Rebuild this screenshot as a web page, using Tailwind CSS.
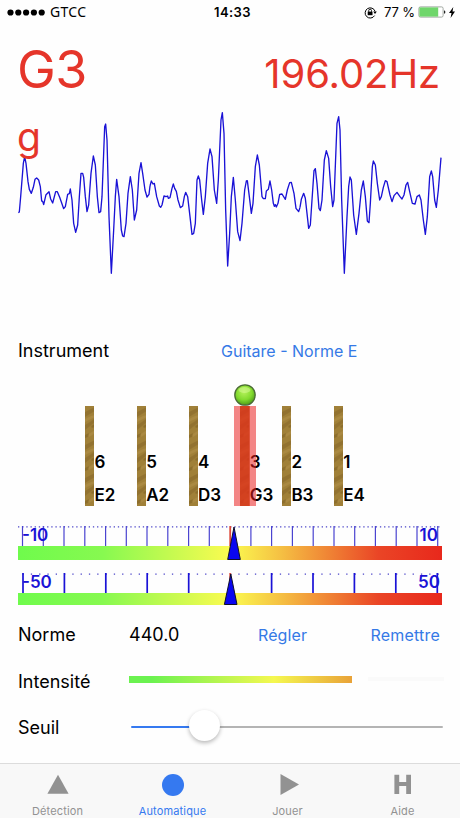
<!DOCTYPE html>
<html lang="fr">

<head>
    <meta charset="utf-8">
    <title>Accordeur</title>
    <meta name="viewport" content="width=device-width, initial-scale=1.0" />
    <script src="https://cdn.jsdelivr.net/npm/@tailwindcss/browser@4"></script>
</head>

<body class="bg-white">
    <div class="w-[460px] h-[818px] flex flex-col overflow-hidden bg-[#fefefe] text-black font-['Inter',sans-serif] whitespace-nowrap">

        <!-- status bar -->
        <header class="h-6 shrink-0 grid grid-cols-3 items-center pl-[7px] pr-[5px] text-[13px] leading-6">
            <div class="flex items-center gap-[5px]">
                <svg class="w-[38px] h-[7px]" viewBox="0 0 38 7">
                    <circle cx="3.5" cy="3.5" r="3.1" />
                    <circle cx="11.3" cy="3.5" r="3.1" />
                    <circle cx="19.1" cy="3.5" r="3.1" />
                    <circle cx="26.9" cy="3.5" r="3.1" />
                    <circle cx="34.7" cy="3.5" r="3.1" />
                </svg>
                <span class="font-['Noto_Sans',sans-serif] text-[14px] tracking-[0.3px]">GTCC</span>
            </div>
            <div class="text-center font-semibold tracking-[0.4px] pl-[3px]">14:33</div>
            <div class="flex items-center justify-end">
                <svg class="w-[13px] h-[13px] mr-[7px]" viewBox="0 0 13 13" fill="none" stroke="black">
                    <path d="M10.6 9.6A5.1 5.1 0 1 1 11.1 5.4" stroke-width="1" />
                    <path d="M9.2 5.6h3.6l-1.8 2.3z" fill="black" stroke="none" />
                    <rect x="3.7" y="5.6" width="4.8" height="3.6" fill="black" stroke="none" />
                    <path d="M4.7 5.8V4.6a1.4 1.4 0 0 1 2.8 0v1.2" stroke-width=".9" />
                </svg>
                <span class="mr-[3px] tracking-[-0.1px]">77 %</span>
                <svg class="w-[28px] h-[12px] mr-[3px]" viewBox="0 0 28 12">
                    <rect x=".9" y=".9" width="24.2" height="10.2" rx="1.5" fill="white" stroke="#8c948c" stroke-width=".8" />
                    <rect x="1.4" y="1.4" width="18.8" height="9.2" fill="#6fd66b" />
                    <path d="M26 4.2q1.4.4 1.4 1.8T26 7.8z" fill="#222" />
                </svg>
                <svg class="w-[6px] h-[11px]" viewBox="0 0 6 11">
                    <path d="M4.3 0L0 6h2.5L1.6 11 6 4.6H3.5z" />
                </svg>
            </div>
        </header>

        <!-- detected note and frequency -->
        <div class="h-[76px] shrink-0 flex items-baseline justify-between pl-[17px] pr-[20px] pt-[15px] text-[#e5352a]">
            <span class="text-[52px] leading-[62px] tracking-[-0.5px]">G3</span>
            <span class="text-[40px] leading-[48px] tracking-[-0.1px]">196.02Hz</span>
        </div>

        <!-- waveform -->
        <div class="relative h-[230px] shrink-0">
            <svg class="w-[460px] h-[180px]" viewBox="0 0 1380 540" fill="none" stroke="#1a12d6" stroke-width="4" stroke-linejoin="round">
                <polyline transform="translate(30)" points="25,338 28,336 32,290 40,190 44,170 48,190 54,245 58,268 64,280 70,262 75,238 80,234 86,240 91,260 95,303 98,304 101,314 108,284 117,275 122,297 128,309 137,275 142,275 149,292 154,306 161,326 166,320 173,283 178,281 181,267 186,300 191,370 197,397 203,375 208,290 213,220 218,220 221,232 226,290 231,335 236,315 243,220 250,168 256,195 262,290 267,338 272,335 276,290 284,80 287,72 291,120 297,350 304,520 311,390 316,290 320,238 327,290 334,390 338,408 342,410 348,370 354,280 361,230 367,270 373,360 380,330 387,220 393,188 398,220 405,270 411,291 417,283 420,258" />
                <polyline transform="translate(450)" points="0,258 4,243 9,252 13,250 20,290 28,318 32,322 36,315 42,288 48,290 53,288 55,295 60,293 66,265 70,252 74,265 79,274 84,300 91,323 98,318 103,290 107,277 113,290 120,350 126,403 131,400 136,370 141,240 145,228 149,240 155,300 160,343 166,290 173,190 180,147 186,170 193,270 200,310 205,240 213,60 217,38 222,100 227,330 233,498 239,400 244,290 250,232 256,300 263,395 270,422 276,370 284,270 289,243 292,242 298,290 304,340 309,310 316,200 322,165 328,195 336,290 340,296 346,296 349,273 355,268 360,243 365,270 370,310 373,319 376,314 379,321 384,310 389,283 396,282 406,298 412,270 419,248 424,247 432,280 438,325 446,335 450,322" />
                <polyline transform="translate(900)" points="0,322 4,298 11,280 16,295 26,385 31,375 36,300 42,212 46,206 51,250 57,325 61,332 66,300 73,180 79,152 86,175 92,260 98,320 102,300 111,70 116,50 120,90 125,300 133,520 141,350 146,260 150,231 154,240 161,345 169,403 177,340 184,270 190,243 196,290 202,363 207,368 211,310 217,200 220,183 226,195 232,250 239,300 244,290 250,262 256,242 261,245 270,285 276,305 282,287 291,277 300,290 306,297 312,285 318,255 323,247 329,275 337,310 345,312 351,290 358,285 363,300 370,360 376,403 382,350 389,230 394,213 398,230 404,300 409,322 415,270 423,173" />
            </svg>
            <span class="absolute left-[17px] top-[13px] text-[39px] leading-[48px] text-[#e5352a]">g</span>
        </div>

        <!-- instrument -->
        <div class="h-[42px] shrink-0 flex items-center pl-[18px]">
            <span class="w-[203px] -mt-px text-[18px]">Instrument</span>
            <span class="text-[16px] text-[#3579e6]">Guitare - Norme E</span>
        </div>

        <!-- strings -->
        <div class="relative h-[154px] shrink-0 pt-[34px] pl-[85px] flex text-[17px] font-semibold">
            <svg class="absolute w-0 h-0">
                <defs>
                    <pattern id="wood" width="9.4" height="33" patternUnits="userSpaceOnUse">
                        <rect width="10" height="33" fill="#a08038" />
                        <path d="M0 6L10 1V5L0 11zM0 19l5-3 5-4v4L0 24z" fill="#927230" />
                        <path d="M0 13l6-3 4-1v2L0 16zM2 29l8-5v3l-6 4z" fill="#aa8942" />
                        <path d="M0 29l4-2-1 4-3 1zM6 20l4-2v3l-3 1z" fill="#8d6e2c" />
                    </pattern>
                </defs>
            </svg>
            <div class="w-[51.8px] flex items-end h-[100px]">
                <svg class="w-[9.4px] h-[100px]"><rect width="9.4" height="100" fill="url(#wood)" /></svg>
                <div class="leading-[33px] -mb-[6px]">6<br>E2</div>
            </div>
            <div class="w-[51.8px] flex items-end h-[100px]">
                <svg class="w-[9.4px] h-[100px]"><rect width="9.4" height="100" fill="url(#wood)" /></svg>
                <div class="leading-[33px] -mb-[6px]">5<br>A2</div>
            </div>
            <div class="w-[51.8px] flex items-end h-[100px]">
                <svg class="w-[9.4px] h-[100px]"><rect width="9.4" height="100" fill="url(#wood)" /></svg>
                <div class="leading-[33px] -mb-[6px]">4<br>D3</div>
            </div>
            <div class="relative w-[41.6px] flex items-end h-[100px]">
                <svg class="w-[9.4px] h-[100px]"><rect width="9.4" height="100" fill="url(#wood)" /></svg>
                <div class="relative leading-[33px] -mb-[6px]">3<br>G3</div>
                <div class="absolute -left-[6.5px] top-0 w-[22px] h-[100px] bg-[#e92020]/55"></div>
                <div class="absolute left-0 top-0 w-[9.4px] h-[100px] bg-[#dc3a18]/55"></div>
                <svg class="absolute -left-[6.5px] -top-[22px] w-[22px] h-[22px]" viewBox="0 0 22 22">
                    <defs>
                        <radialGradient id="ball" cx=".45" cy=".35" r=".65">
                            <stop offset="0" stop-color="#b6f25c" />
                            <stop offset=".6" stop-color="#82da2e" />
                            <stop offset="1" stop-color="#4d9c18" />
                        </radialGradient>
                    </defs>
                    <circle cx="11" cy="11" r="10.2" fill="url(#ball)" stroke="#4b6b35" stroke-width="1.3" />
                    <ellipse cx="10.5" cy="6" rx="6" ry="3" fill="#d5fa96" opacity=".55" />
                </svg>
            </div>
            <div class="w-[51.8px] flex items-end h-[100px]">
                <svg class="w-[9.4px] h-[100px]"><rect width="9.4" height="100" fill="url(#wood)" /></svg>
                <div class="leading-[33px] -mb-[6px]">2<br>B3</div>
            </div>
            <div class="w-[51.8px] flex items-end h-[100px]">
                <svg class="w-[9.4px] h-[100px]"><rect width="9.4" height="100" fill="url(#wood)" /></svg>
                <div class="leading-[33px] -mb-[6px]">1<br>E4</div>
            </div>
        </div>

        <!-- fine gauge -->
        <div class="relative h-[47px] shrink-0 px-[18px] text-[17px] leading-[18px] font-semibold text-[#1a12d6]">
            <svg class="w-[424px] h-[34px]" viewBox="0 0 424 34">
                <defs>
                    <linearGradient id="heat">
                        <stop offset="0" stop-color="#6ffb4c" />
                        <stop offset=".2" stop-color="#87f950" />
                        <stop offset=".5" stop-color="#fbfb50" />
                        <stop offset=".62" stop-color="#f5c043" />
                        <stop offset=".85" stop-color="#ea4526" />
                        <stop offset="1" stop-color="#e8281c" />
                    </linearGradient>
                </defs>
                <path d="M0 .9H424" stroke="#4a44c8" stroke-width="1.2" stroke-dasharray="1.3 2.86" />
                <path d="M4.5 0v20M25.3 0v20M46 0v20M66.8 0v20M87.6 0v20M108.3 0v20M129 0v20M149.8 0v20M170.6 0v20M191.3 0v20M232.9 0v20M253.6 0v20M274.4 0v20M295.2 0v20M316 0v20M336.7 0v20M357.4 0v20M378.2 0v20M399 0v20M419.7 0v20" stroke="#4a44d0" stroke-width="1.2" />
                <path d="M212.2 0v20" stroke="#dd4a3c" stroke-width="1.8" />
                <rect y="20" width="424" height="14" fill="url(#heat)" />
                <path d="M216 1L222.3 33.5H209.7z" fill="#0a06f0" stroke="#10102a" stroke-width="1" />
            </svg>
            <span class="absolute left-[22px] top-0">-10</span>
            <span class="absolute right-[22px] top-0">10</span>
        </div>

        <!-- coarse gauge -->
        <div class="relative h-[41px] shrink-0 px-[18px] text-[17px] leading-[18px] font-semibold text-[#1a12d6]">
            <svg class="w-[424px] h-[32px]" viewBox="0 0 424 32">
                <path d="M4.5 1.2H424" stroke="#4a44c8" stroke-width="1.2" stroke-dasharray="1.3 7.0" />
                <path d="M5 0v20M46.4 0v20M87.8 0v20M129.2 0v20M170.7 0v20M253.6 0v20M295 0v20M336.4 0v20M377.8 0v20M419.3 0v20" stroke="#1a12d6" stroke-width="1.7" />
                <path d="M212.2 0v20" stroke="#dd4a3c" stroke-width="1.8" />
                <rect y="20" width="424" height="12" fill="url(#heat)" />
                <path d="M212.8 1L219 31.5H206.4z" fill="#0a06f0" stroke="#10102a" stroke-width="1" />
            </svg>
            <span class="absolute left-[22px] top-0">-50</span>
            <span class="absolute right-[20px] top-0">50</span>
        </div>

        <!-- settings -->
        <div class="h-[42px] shrink-0 flex items-center pl-[18px] pr-[20px] text-[18px]">
            <span class="w-[111px] -mt-px">Norme</span>
            <span class="w-[129px] -mt-px">440.0</span>
            <span class="flex-1 text-[16px] tracking-[0.1px] text-[#3579e6]">Régler</span>
            <span class="text-[16px] tracking-[0.2px] text-[#3579e6]">Remettre</span>
        </div>
        <div class="h-[50px] shrink-0 flex items-center pl-[18px] pr-[16px] text-[18px]">
            <span class="w-[111px]">Intensité</span>
            <div class="w-[223px] h-[7px] -mt-[3px] bg-linear-to-r/srgb from-[#6bf250] from-10% via-[#f5f850] via-65% to-[#e9a238]"></div>
            <div class="flex-1 h-1 ml-4 -mt-[5px] bg-[#fafafa]"></div>
        </div>
        <div class="h-[57px] shrink-0 flex items-start pl-[18px] pr-[17px] pt-[8px] text-[18px]">
            <span class="w-[113px]">Seuil</span>
            <div class="relative flex-1 flex h-[2px] mt-[12px]">
                <div class="w-[74px] bg-[#3579f0] rounded-full"></div>
                <div class="flex-1 bg-[#b4b4b4] rounded-full"></div>
                <div class="absolute left-[58px] -top-[16px] size-[31px] rounded-full bg-white shadow-[0_2px_4px_rgba(0,0,0,0.28)]"></div>
            </div>
        </div>

        <!-- tab bar -->
        <nav class="flex-1 grid grid-cols-4 border-t border-[#dcdcdc] bg-[#f8f8f8] text-[#929292] text-[11px] leading-4 tracking-[0.15px]">
            <div class="flex flex-col items-center pt-[10px]">
                <svg class="w-[22px] h-[22px] mb-[7px]" viewBox="0 0 22 22" fill="currentColor"><path d="M11 .8L21.6 19.8H.4z" /></svg>
                Détection
            </div>
            <div class="flex flex-col items-center pt-[10px] text-[#3579f0]">
                <svg class="w-[22px] h-[22px] mb-[7px]" viewBox="0 0 22 22" fill="currentColor"><circle cx="11" cy="11" r="11" /></svg>
                Automatique
            </div>
            <div class="flex flex-col items-center pt-[10px]">
                <svg class="w-[22px] h-[22px] mb-[7px]" viewBox="0 0 22 22" fill="currentColor"><path d="M3.5 0L22 10.5 3.5 21z" /></svg>
                Jouer
            </div>
            <div class="flex flex-col items-center pt-[10px]">
                <svg class="w-[22px] h-[22px] mb-[7px]" viewBox="0 0 22 22" fill="currentColor"><path d="M2.4 .8h4.8v7.3h7V.8H19v19.2h-4.8v-8h-7v8H2.4z" /></svg>
                Aide
            </div>
        </nav>
    </div>
</body>

</html>
